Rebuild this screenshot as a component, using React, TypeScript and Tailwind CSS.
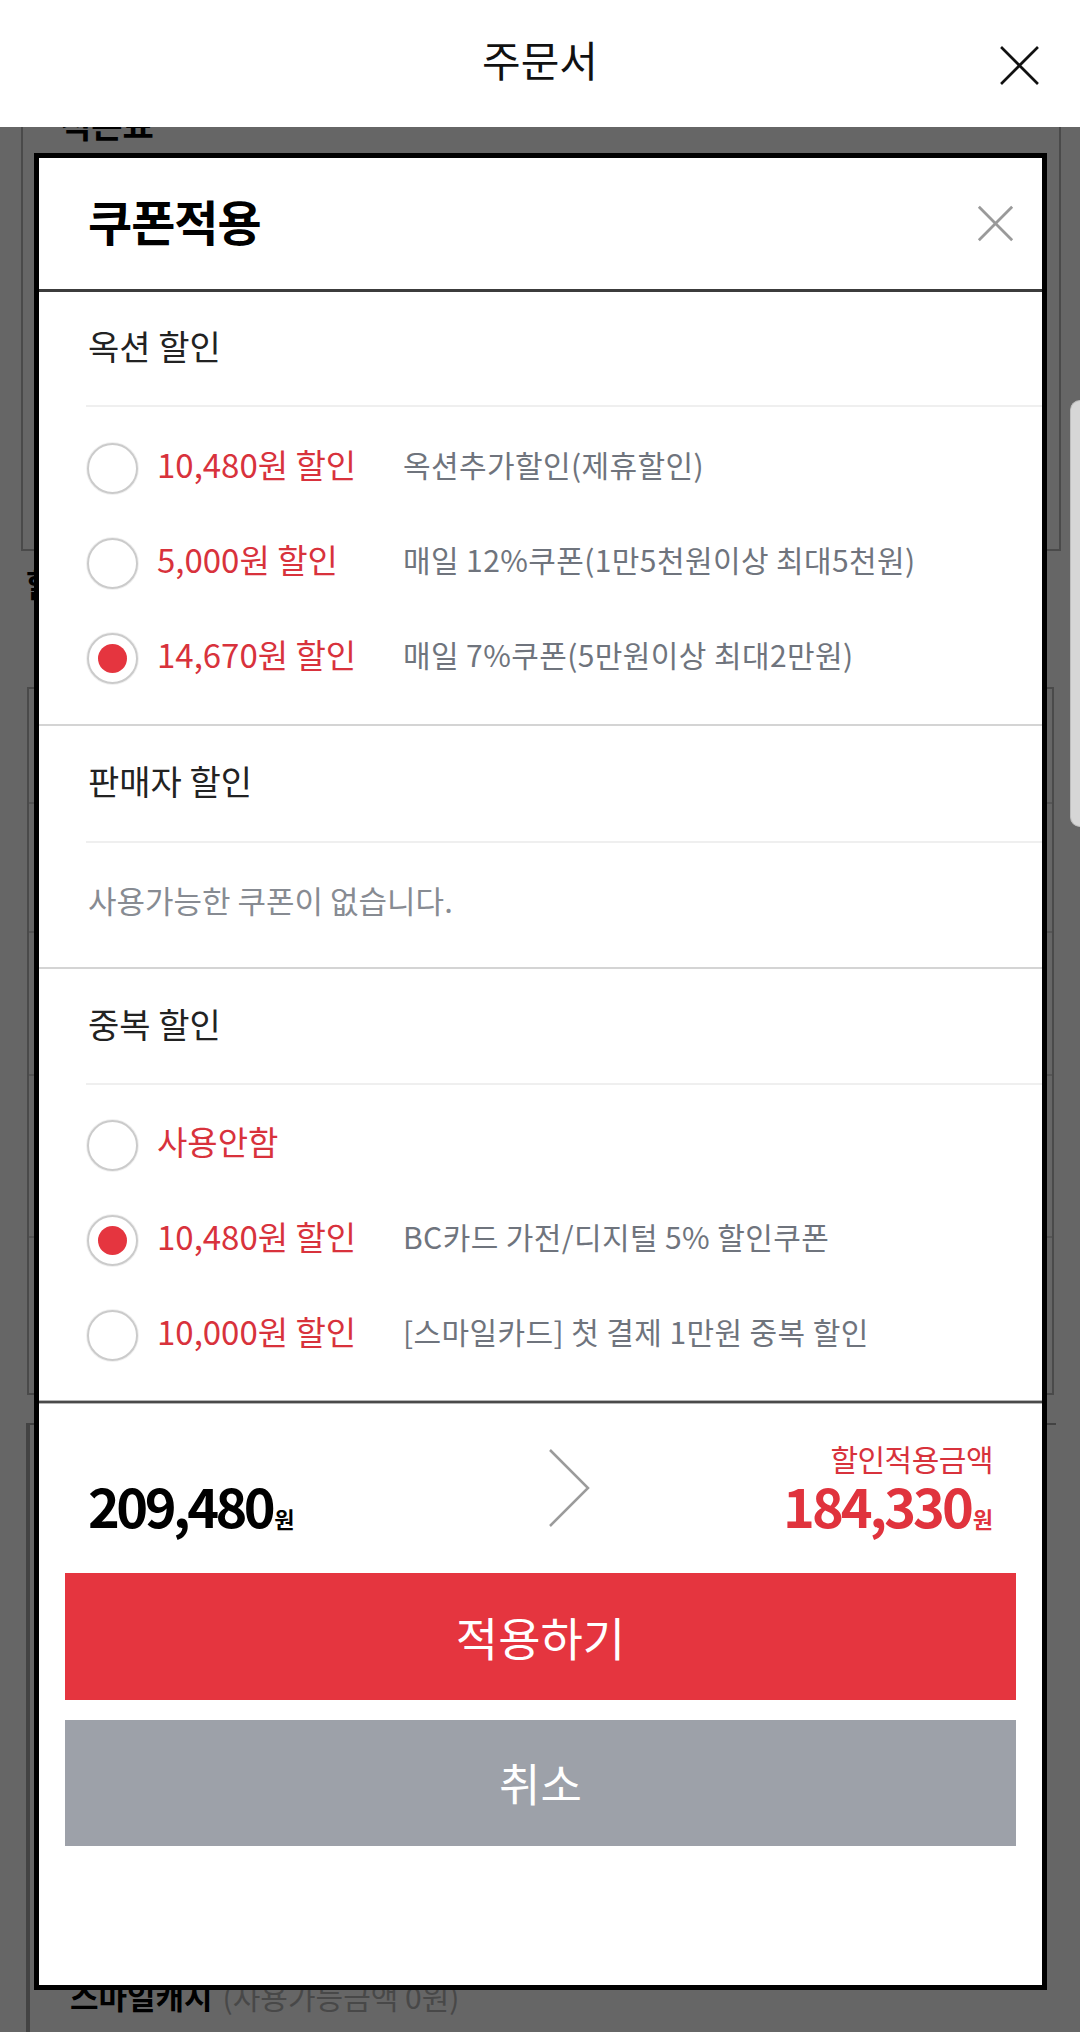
import React, { useState } from 'react';

interface Coupon {
  id: string;
  amount: string;
  desc?: string;
}

const optionCoupons: Coupon[] = [
  { id: 'o1', amount: '10,480원 할인', desc: '옥션추가할인(제휴할인)' },
  { id: 'o2', amount: '5,000원 할인', desc: '매일 12%쿠폰(1만5천원이상 최대5천원)' },
  { id: 'o3', amount: '14,670원 할인', desc: '매일 7%쿠폰(5만원이상 최대2만원)' },
];

const dupCoupons: Coupon[] = [
  { id: 'd0', amount: '사용안함' },
  { id: 'd1', amount: '10,480원 할인', desc: 'BC카드 가전/디지털 5% 할인쿠폰' },
  { id: 'd2', amount: '10,000원 할인', desc: '[스마일카드] 첫 결제 1만원 중복 할인' },
];

const CloseIcon = ({ size, color, width }: { size: number; color: string; width: number }) => (
  <svg width={size} height={size} viewBox="0 0 40 40" fill="none">
    <path d="M2 2L38 38M38 2L2 38" stroke={color} strokeWidth={width} />
  </svg>
);

const CouponRow = ({
  coupon,
  checked,
  onSelect,
}: {
  coupon: Coupon;
  checked: boolean;
  onSelect: () => void;
}) => (
  <button onClick={onSelect} className="flex h-[95px] w-full items-center pl-[48px] text-left">
    <span className="flex h-[51px] w-[51px] shrink-0 items-center justify-center rounded-full border-2 border-[#cbcbcb] bg-white shadow-[0_0_0_1px_#f1f1f1]">
      {checked && <span className="h-[29px] w-[29px] rounded-full bg-[#e5353f]" />}
    </span>
    <span className="mb-[9px] ml-[19px] w-[246px] shrink-0 text-[33px] leading-[40px] text-[#d8323c]">
      {coupon.amount}
    </span>
    {coupon.desc && (
      <span className="mb-[9px] text-[30px] leading-[40px] tracking-[0.4px] text-[#6f747d]">{coupon.desc}</span>
    )}
  </button>
);

const SectionHead = ({ title, h }: { title: string; h: string }) => (
  <>
    <div className={`flex items-center pb-[6px] pl-[49px] text-[34px] text-[#222] ${h}`}>{title}</div>
    <div className="ml-[47px] h-[2px] bg-[#efefef]" />
  </>
);

export default function App() {
  const [optionSel, setOptionSel] = useState('o3');
  const [dupSel, setDupSel] = useState('d1');

  return (
    <div className="relative h-[2032px] w-[1080px] overflow-hidden bg-white font-['Noto_Sans_CJK_KR','Noto_Sans',sans-serif]">
      {/* page behind the dim */}
      <div className="pt-[60px]">
        <div className="ml-[21px] h-[491px] w-[1040px] border-2 border-[#b8b8b8] pl-[37px] pt-[42px]">
          <div className="text-[34px] font-bold leading-[40px] text-black">적은표</div>
        </div>
        <div className="ml-[26px] mt-[12px] text-[32px] font-bold leading-[40px] text-black">할인/적립</div>
        <div className="ml-[27px] mt-[84px] flex h-[708px] w-[1027px] flex-col border-2 border-[#b8b8b8]">
          <div className="h-[115px] border-b-2 border-[#d8d8d8]" />
          <div className="h-[129px] border-b-2 border-[#d8d8d8]" />
          <div className="h-[143px] border-b-2 border-[#d8d8d8]" />
          <div className="h-[162px] border-b-2 border-[#d8d8d8]" />
        </div>
        <div className="ml-[26px] mt-[28px] h-[700px] w-[1030px] border-l-4 border-t-2 border-[#a8a8a8] pl-[40px] pt-[548px]">
          <span className="text-[31px] font-bold text-black">스마일캐시</span>
          <span className="ml-[10px] text-[30px] text-[#b5b5b5]">(사용가능금액 0원)</span>
        </div>
      </div>

      {/* dim */}
      <div className="absolute inset-0 bg-black/60" />

      {/* header */}
      <div className="absolute left-0 right-0 top-0 z-10 flex h-[127px] items-center justify-center bg-white">
        <span className="pb-[10px] text-[42px] text-[#111]">주문서</span>
        <button className="absolute right-[40px] top-[45px]">
          <CloseIcon size={41} color="#111" width={2.6} />
        </button>
      </div>

      {/* scrollbar */}
      <div className="absolute right-0 top-[400px] z-30 h-[427px] w-[10px] rounded-l-[10px] border border-r-0 border-[#bdbdbd] bg-[#d6d6d6]" />

      {/* coupon modal */}
      <div className="absolute left-[34px] top-[153px] z-20 flex h-[1837px] w-[1013px] flex-col border-[5px] border-black bg-white">
        <div className="flex h-[131px] items-center justify-between pl-[49px] pr-[28px]">
          <span className="pb-[8px] text-[48px] font-bold tracking-[-1px] text-black">쿠폰적용</span>
          <button>
            <CloseIcon size={37} color="#9a9a9a" width={3} />
          </button>
        </div>
        <div className="h-[3px] bg-[#3c3c3c]" />

        {/* 옥션 할인 */}
        <SectionHead title="옥션 할인" h="h-[113px]" />
        <div className="pb-[18px] pt-[14px]">
          {optionCoupons.map((c) => (
            <CouponRow key={c.id} coupon={c} checked={optionSel === c.id} onSelect={() => setOptionSel(c.id)} />
          ))}
        </div>
        <div className="h-[2px] bg-[#d4d4d4]" />

        {/* 판매자 할인 */}
        <SectionHead title="판매자 할인" h="h-[115px]" />
        <div className="flex h-[124px] items-center pb-[10px] pl-[49px] text-[31px] text-[#878b92]">
          사용가능한 쿠폰이 없습니다.
        </div>
        <div className="h-[2px] bg-[#d4d4d4]" />

        {/* 중복 할인 */}
        <SectionHead title="중복 할인" h="h-[114px]" />
        <div className="pb-[17px] pt-[13px]">
          {dupCoupons.map((c) => (
            <CouponRow key={c.id} coupon={c} checked={dupSel === c.id} onSelect={() => setDupSel(c.id)} />
          ))}
        </div>
        <div className="h-[4px] border-y border-[#b5b5b5] bg-[#4a4a4a]" />

        {/* total */}
        <div className="flex h-[169px] items-end justify-between px-[49px] pb-[38px]">
          <div className="flex items-baseline text-black">
            <span className="text-[54px] font-bold leading-[60px] tracking-[-3.5px]">209,480</span>
            <span className="ml-[2px] text-[22px] font-bold">원</span>
          </div>
          <svg width="44" height="80" viewBox="0 0 44 80" fill="none" className="mb-[7px] ml-[60px]">
            <path d="M3 2L41 40L3 78" stroke="#9b9b9b" strokeWidth="2.5" />
          </svg>
          <div className="flex flex-col items-end">
            <span className="text-[30px] leading-[34px] tracking-[-0.5px] text-[#d8323c]">할인적용금액</span>
            <div className="flex items-baseline text-[#e0333d]">
              <span className="text-[54px] font-bold leading-[60px] tracking-[-3px]">184,330</span>
              <span className="ml-[2px] text-[22px] font-bold">원</span>
            </div>
          </div>
        </div>

        <div className="flex flex-col gap-[20px] px-[26px]">
          <button className="h-[127px] bg-[#e5353f] text-[46px] text-white">적용하기</button>
          <button className="h-[126px] bg-[#9da1a9] text-[45px] text-white">취소</button>
        </div>
      </div>
    </div>
  );
}
